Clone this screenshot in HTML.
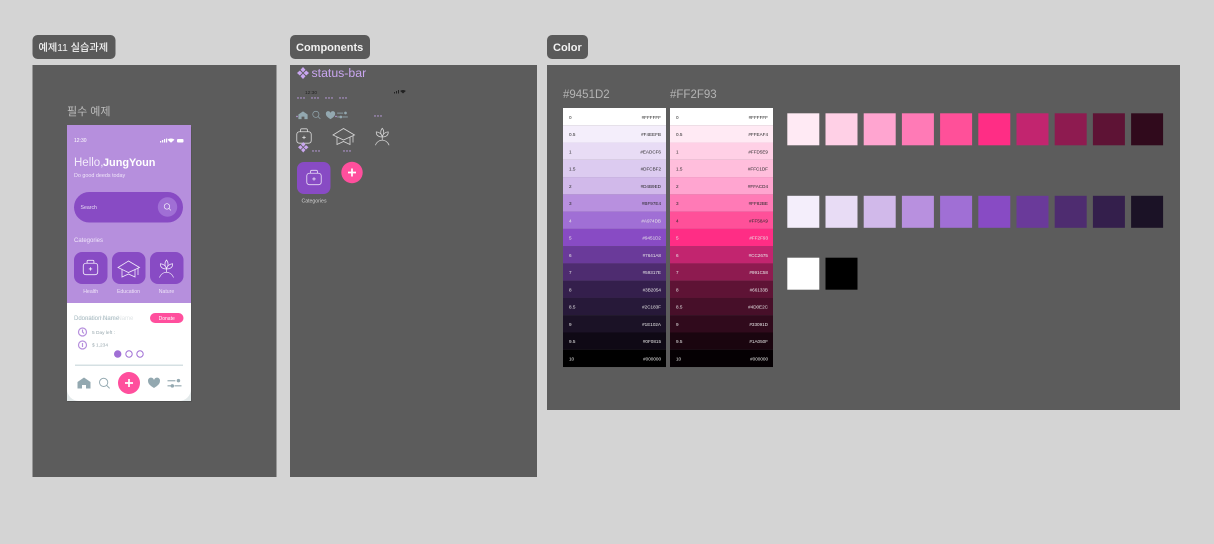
<!DOCTYPE html>
<html lang="ko">
<head>
<meta charset="utf-8">
<title>Design board</title>
<style>
html,body{margin:0;padding:0;background:#d4d4d4;width:1214px;height:544px;overflow:hidden}
svg{display:block;font-family:"Liberation Sans","Noto Sans CJK KR",sans-serif}
.d{fill:#2a2a2a}.l{fill:#e8e8e8}
.t text{font-size:4.6px}
</style>
</head>
<body>
<svg width="1214" height="544" viewBox="0 0 1214 544" xmlns="http://www.w3.org/2000/svg">
<defs>
<symbol id="kit" viewBox="0 0 20 20"><g fill="none" stroke="currentColor" stroke-width="1"><rect x="1.5" y="5" width="17" height="13.5" rx="3"/><path d="M6 5V2.800A1.300 1.300 0 0 1 7.300 1.500h5.400A1.300 1.300 0 0 1 14 2.800V5M8 11.700h4M10 9.700v4"/></g></symbol>
<symbol id="cap" viewBox="0 0 24 18"><g fill="none" stroke="currentColor" stroke-width=".8"><path d="M11.500 1L1 7.500l10.500 5 11-5z"/><path d="M5 9.500v7.500l6.500-3 6.500 3V9.500M21 8v7"/></g></symbol>
<symbol id="plant" viewBox="0 0 18 20"><g fill="none" stroke="currentColor" stroke-width=".8"><path d="M9 1C6.800 3.500 6.800 7 9 10c2.200-3 2.200-6.500 0-9zM2.500 5c-.3 3.300 2 5.500 6.500 5.500C8.700 7.500 6 5.200 2.500 5zM15.500 5c.3 3.300-2 5.500-6.500 5.500.3-3 3-5.300 6.500-5.500zM9 10.500V14M1.500 19.500C3 16 6 14 9 14s6 2 7.500 5.500"/></g></symbol>
<symbol id="home" viewBox="0 0 14 12"><path d="M7 .5L.5 5v6.500h4.500V8h4v3.500h4.500V5z" fill="currentColor"/></symbol>
<symbol id="find" viewBox="0 0 14 14"><g fill="none" stroke="currentColor" stroke-width="1.100"><circle cx="6" cy="6" r="4.800"/><path d="M9.500 9.500L13 13"/></g></symbol>
<symbol id="heart" viewBox="0 0 14 12"><path d="M7 11.500C3 9 .5 7 .5 4A3.200 3.200 0 0 1 7 2.800 3.200 3.200 0 0 1 13.500 4C13.500 7 11 9 7 11.500z" fill="currentColor"/></symbol>
<symbol id="sliders" viewBox="0 0 16 12"><g fill="currentColor"><rect x="0" y="2.500" width="9" height="1.300"/><rect x="0" y="8.300" width="4" height="1.300"/><rect x="8" y="8.300" width="8" height="1.300"/><circle cx="12.500" cy="3" r="2"/><circle cx="5.500" cy="9" r="2"/></g></symbol>
<symbol id="dia" viewBox="0 0 12 12"><g fill="currentColor"><path d="M6 0l2.500 2.800L6 5.400 3.500 2.800zM6 6.600l2.500 2.600L6 12 3.500 9.200zM0 6l2.800-2.500L5.400 6 2.800 8.500zM6.600 6l2.600-2.500L12 6 9.200 8.500z"/></g></symbol>
</defs>

<rect width="1214" height="544" fill="#d4d4d4"/>

<!-- frames -->
<rect x="32.500" y="65" width="244" height="412" fill="#5c5c5c"/>
<rect x="290" y="65" width="247" height="412" fill="#5c5c5c"/>
<rect x="547" y="65" width="633" height="345" fill="#5c5c5c"/>

<!-- frame labels -->
<rect x="32.500" y="35" width="83" height="24" rx="5" fill="#5a5a5a"/>
<text x="38.500" y="51" font-size="10.200" font-weight="500" fill="#f2f2f2">예제11 실습과제</text>
<rect x="290" y="35" width="80" height="24" rx="5" fill="#5a5a5a"/>
<text x="296" y="51" font-size="11" font-weight="700" fill="#f2f2f2">Components</text>
<rect x="547" y="35" width="41" height="24" rx="5" fill="#5a5a5a"/>
<text x="553" y="51" font-size="11" font-weight="700" fill="#f2f2f2">Color</text>

<!-- phone -->
<text x="67" y="115" font-size="11" fill="#bdbdbd">필수 예제</text>
<rect x="67.500" y="127" width="124" height="275" fill="#4e4e4e"/>
<rect x="67" y="125" width="124" height="276" fill="#e3e9ea"/>
<rect x="67" y="125" width="124" height="178" fill="#b68fdd"/>
<path d="M67 303h124v86a12 12 0 0 1-12 12H79a12 12 0 0 1-12-12z" fill="#fff"/>
<text x="74" y="142" font-size="5" fill="#fff">12:30</text>
<g fill="#fff"><rect x="160" y="141" width="1.200" height="1.500"/><rect x="162" y="140" width="1.200" height="2.500"/><rect x="164" y="139" width="1.200" height="3.500"/><rect x="166" y="138.500" width="1.200" height="4"/><path d="M171 138.500c1.700 0 2.800.6 3.400 1.200l-3.400 3-3.400-3c.6-.6 1.700-1.200 3.400-1.200z"/><rect x="177" y="139" width="6.500" height="3.500" rx="1"/></g>
<text x="74" y="166" font-size="11.500" fill="#f3ecfb">Hello,</text>
<text x="103" y="166" font-size="10.900" font-weight="700" fill="#fff">JungYoun</text>
<text x="74" y="177" font-size="5.400" fill="#f0e6fa">Do good deeds today</text>
<rect x="74" y="192" width="109" height="30.500" rx="15.200" fill="#884bc4"/>
<text x="80.500" y="209" font-size="5.200" fill="#e8dcf5">Search</text>
<circle cx="167.500" cy="207" r="9.700" fill="#a06fd5"/>
<use href="#find" x="163.500" y="203" width="8" height="8" color="#fff"/>
<text x="74" y="242" font-size="6" fill="#f0e6fa">Categories</text>
<rect x="74" y="252" width="33.500" height="32" rx="8" fill="#884bc4"/>
<rect x="112" y="252" width="33.500" height="32" rx="8" fill="#884bc4"/>
<rect x="150" y="252" width="33.500" height="32" rx="8" fill="#884bc4"/>
<use href="#kit" x="82" y="259" width="17" height="17" color="#f3ecfb"/>
<use href="#cap" x="117" y="260" width="24" height="18" color="#f3ecfb"/>
<use href="#plant" x="158" y="259" width="17" height="19" color="#f3ecfb"/>
<text x="90.700" y="293" font-size="5.200" text-anchor="middle" fill="#eee4f8">Health</text>
<text x="128.500" y="293" font-size="5.200" text-anchor="middle" fill="#eee4f8">Education</text>
<text x="166.500" y="293" font-size="5.200" text-anchor="middle" fill="#eee4f8">Nature</text>

<text x="74" y="320" font-size="6" fill="#dfe4e6">Donation Name Name</text>
<text x="74" y="320" font-size="6" fill="#a9bcc3">Ddonation Name</text>
<rect x="150" y="313" width="33.500" height="10" rx="5" fill="#ff4f9d"/>
<text x="166.700" y="320" font-size="5" text-anchor="middle" fill="#fff">Donate</text>
<g fill="none" stroke="#b68fdd" stroke-width="1.200"><circle cx="82.500" cy="332" r="4"/><path d="M82.500 329.500V332l1.500 1.500"/><circle cx="82.500" cy="345" r="4"/><path d="M82.500 343v4"/></g>
<text x="92" y="334" font-size="4.800" fill="#98a8ae">5 Day left :</text>
<text x="92" y="346.500" font-size="4.800" fill="#98a8ae">$ 1,234</text>
<circle cx="117.700" cy="354" r="3.700" fill="#a06fd5"/>
<circle cx="129" cy="354" r="3.200" fill="none" stroke="#a06fd5" stroke-width="1"/>
<circle cx="140" cy="354" r="3.200" fill="none" stroke="#a06fd5" stroke-width="1"/>
<rect x="75" y="364.500" width="108" height="1.500" fill="#d5e0e3"/>
<use href="#home" x="77" y="377" width="14" height="12" color="#93a8b0"/>
<use href="#find" x="98.500" y="377" width="12" height="12.500" color="#93a8b0"/>
<circle cx="129" cy="383" r="11" fill="#ff4f9d"/>
<path d="M125 383h8M129 379v8" stroke="#fff" stroke-width="1.700" fill="none"/>
<use href="#heart" x="147.500" y="377.500" width="13" height="11" color="#93a8b0"/>
<use href="#sliders" x="167" y="378" width="15" height="10.500" color="#93a8b0"/>

<!-- components -->
<use href="#dia" x="297" y="67" width="12" height="12" color="#c9a6f0"/>
<text x="311.500" y="77" font-size="12.300" fill="#c9a6f0">status-bar</text>
<text x="305" y="94" font-size="4.800" fill="#222">12:30</text>
<g fill="#222"><rect x="394" y="92" width="1" height="1.500"/><rect x="396" y="91" width="1" height="2.500"/><rect x="398" y="90" width="1" height="3.500"/><path d="M403 90c1.500 0 2.300.5 2.800 1L403 93.500 400.200 91c.5-.5 1.300-1 2.800-1z"/></g>
<g fill="#c9a6f0"><circle cx="298" cy="98" r=".7"/><circle cx="301" cy="98" r=".7"/><circle cx="304" cy="98" r=".7"/><circle cx="312" cy="98" r=".7"/><circle cx="315" cy="98" r=".7"/><circle cx="318" cy="98" r=".7"/><circle cx="326" cy="98" r=".7"/><circle cx="329" cy="98" r=".7"/><circle cx="332" cy="98" r=".7"/><circle cx="340" cy="98" r=".7"/><circle cx="343" cy="98" r=".7"/><circle cx="346" cy="98" r=".7"/>
<circle cx="297" cy="116.500" r=".7"/><circle cx="336" cy="116.500" r=".7"/><circle cx="375" cy="116" r=".7"/><circle cx="378" cy="116" r=".7"/><circle cx="381" cy="116" r=".7"/>
<circle cx="313" cy="151" r=".7"/><circle cx="316" cy="151" r=".7"/><circle cx="319" cy="151" r=".7"/><circle cx="344" cy="151" r=".7"/><circle cx="347" cy="151" r=".7"/><circle cx="350" cy="151" r=".7"/></g>
<use href="#home" x="298" y="111" width="10" height="8.500" color="#93a8b0"/>
<use href="#find" x="312" y="110.500" width="9" height="9" color="#93a8b0"/>
<use href="#heart" x="325.500" y="111" width="10" height="8.500" color="#93a8b0"/>
<use href="#sliders" x="337" y="111" width="11" height="8" color="#93a8b0"/>
<use href="#kit" x="295.500" y="127.500" width="17" height="17" color="#d8d8d8"/>
<use href="#cap" x="332" y="127.500" width="24" height="18" color="#d8d8d8"/>
<use href="#plant" x="374" y="127" width="16.500" height="19" color="#d8d8d8"/>
<use href="#dia" x="298" y="142" width="10.500" height="10.500" color="#c9a6f0"/>
<rect x="297" y="162" width="33.500" height="32" rx="7" fill="#884bc4"/>
<use href="#kit" x="305.500" y="169" width="17" height="17" color="#e8dcf5"/>
<text x="314" y="202.500" font-size="5.200" text-anchor="middle" fill="#cfcfcf">Categories</text>
<circle cx="352" cy="172.500" r="10.700" fill="#ff4f9d"/>
<path d="M348 172.500h8M352 168.500v8" stroke="#fff" stroke-width="1.700" fill="none"/>

<!-- color titles -->
<text x="563" y="98" font-size="11.500" fill="#b4b4b4">#9451D2</text>
<text x="670" y="98" font-size="11.500" fill="#b4b4b4">#FF2F93</text>

<!-- purple table -->
<g>
<rect x="563" y="108" width="103" height="17.300" fill="#ffffff"/>
<rect x="563" y="125.270" width="103" height="17.300" fill="#f4eefb"/>
<rect x="563" y="142.530" width="103" height="17.300" fill="#e8dcf5"/>
<rect x="563" y="159.800" width="103" height="17.300" fill="#dccbf0"/>
<rect x="563" y="177.070" width="103" height="17.300" fill="#d1b9ea"/>
<rect x="563" y="194.330" width="103" height="17.300" fill="#b890df"/>
<rect x="563" y="211.600" width="103" height="17.300" fill="#a06fd5"/>
<rect x="563" y="228.870" width="103" height="17.300" fill="#884bc4"/>
<rect x="563" y="246.130" width="103" height="17.300" fill="#6a3a9a"/>
<rect x="563" y="263.400" width="103" height="17.300" fill="#4e2c70"/>
<rect x="563" y="280.670" width="103" height="17.300" fill="#341f4c"/>
<rect x="563" y="297.930" width="103" height="17.300" fill="#271939"/>
<rect x="563" y="315.200" width="103" height="17.300" fill="#1b1226"/>
<rect x="563" y="332.470" width="103" height="17.300" fill="#0f0915"/>
<rect x="563" y="349.730" width="103" height="17.300" fill="#000000"/>
</g>
<g class="t">
<text class="d" x="569" y="119">0</text><text class="d" x="661" y="119" text-anchor="end">#FFFFFF</text>
<text class="d" x="569" y="136">0.5</text><text class="d" x="661" y="136" text-anchor="end">#F4EEFB</text>
<text class="d" x="569" y="153.500">1</text><text class="d" x="661" y="153.500" text-anchor="end">#EADCF6</text>
<text class="d" x="569" y="170.500">1.5</text><text class="d" x="661" y="170.500" text-anchor="end">#DFCBF2</text>
<text class="d" x="569" y="188">2</text><text class="d" x="661" y="188" text-anchor="end">#D4B9ED</text>
<text class="d" x="569" y="205">3</text><text class="d" x="661" y="205" text-anchor="end">#BF97E4</text>
<text class="l" x="569" y="222.500">4</text><text class="l" x="661" y="222.500" text-anchor="end">#A974DB</text>
<text class="l" x="569" y="239.500">5</text><text class="l" x="661" y="239.500" text-anchor="end">#9451D2</text>
<text class="l" x="569" y="257">6</text><text class="l" x="661" y="257" text-anchor="end">#7641A8</text>
<text class="l" x="569" y="274">7</text><text class="l" x="661" y="274" text-anchor="end">#59317E</text>
<text class="l" x="569" y="291.500">8</text><text class="l" x="661" y="291.500" text-anchor="end">#3B2054</text>
<text class="l" x="569" y="308.500">8.5</text><text class="l" x="661" y="308.500" text-anchor="end">#2C183F</text>
<text class="l" x="569" y="326">9</text><text class="l" x="661" y="326" text-anchor="end">#1E102A</text>
<text class="l" x="569" y="343">9.5</text><text class="l" x="661" y="343" text-anchor="end">#0F0815</text>
<text class="l" x="569" y="360.500">10</text><text class="l" x="661" y="360.500" text-anchor="end">#000000</text>
</g>

<!-- pink table -->
<g>
<rect x="670" y="108" width="103" height="17.300" fill="#ffffff"/>
<rect x="670" y="125.270" width="103" height="17.300" fill="#ffeaf4"/>
<rect x="670" y="142.530" width="103" height="17.300" fill="#ffd0e6"/>
<rect x="670" y="159.800" width="103" height="17.300" fill="#ffbedc"/>
<rect x="670" y="177.070" width="103" height="17.300" fill="#ffa5d0"/>
<rect x="670" y="194.330" width="103" height="17.300" fill="#ff7ab6"/>
<rect x="670" y="211.600" width="103" height="17.300" fill="#ff5099"/>
<rect x="670" y="228.870" width="103" height="17.300" fill="#ff2d85"/>
<rect x="670" y="246.130" width="103" height="17.300" fill="#c2256f"/>
<rect x="670" y="263.400" width="103" height="17.300" fill="#8e1b50"/>
<rect x="670" y="280.670" width="103" height="17.300" fill="#5e1335"/>
<rect x="670" y="297.930" width="103" height="17.300" fill="#470f29"/>
<rect x="670" y="315.200" width="103" height="17.300" fill="#300a1c"/>
<rect x="670" y="332.470" width="103" height="17.300" fill="#1a050f"/>
<rect x="670" y="349.730" width="103" height="17.300" fill="#050003"/>
</g>
<g class="t">
<text class="d" x="676" y="119">0</text><text class="d" x="768" y="119" text-anchor="end">#FFFFFF</text>
<text class="d" x="676" y="136">0.5</text><text class="d" x="768" y="136" text-anchor="end">#FFEAF4</text>
<text class="d" x="676" y="153.500">1</text><text class="d" x="768" y="153.500" text-anchor="end">#FFD5E9</text>
<text class="d" x="676" y="170.500">1.5</text><text class="d" x="768" y="170.500" text-anchor="end">#FFC1DF</text>
<text class="d" x="676" y="188">2</text><text class="d" x="768" y="188" text-anchor="end">#FFACD4</text>
<text class="d" x="676" y="205">3</text><text class="d" x="768" y="205" text-anchor="end">#FF82BE</text>
<text class="d" x="676" y="222.500">4</text><text class="d" x="768" y="222.500" text-anchor="end">#FF58A9</text>
<text class="l" x="676" y="239.500">5</text><text class="l" x="768" y="239.500" text-anchor="end">#FF2F93</text>
<text class="l" x="676" y="257">6</text><text class="l" x="768" y="257" text-anchor="end">#CC2675</text>
<text class="l" x="676" y="274">7</text><text class="l" x="768" y="274" text-anchor="end">#991C58</text>
<text class="l" x="676" y="291.500">8</text><text class="l" x="768" y="291.500" text-anchor="end">#66133B</text>
<text class="l" x="676" y="308.500">8.5</text><text class="l" x="768" y="308.500" text-anchor="end">#4D0E2C</text>
<text class="l" x="676" y="326">9</text><text class="l" x="768" y="326" text-anchor="end">#33091D</text>
<text class="l" x="676" y="343">9.5</text><text class="l" x="768" y="343" text-anchor="end">#1A050F</text>
<text class="l" x="676" y="360.500">10</text><text class="l" x="768" y="360.500" text-anchor="end">#000000</text>
</g>

<!-- swatches -->
<g>
<rect x="787.300" y="113.300" width="32" height="32" fill="#ffeaf4"/>
<rect x="825.500" y="113.300" width="32" height="32" fill="#ffd0e6"/>
<rect x="863.700" y="113.300" width="32" height="32" fill="#ffa5d0"/>
<rect x="901.900" y="113.300" width="32" height="32" fill="#ff7ab6"/>
<rect x="940.100" y="113.300" width="32" height="32" fill="#ff5099"/>
<rect x="978.300" y="113.300" width="32" height="32" fill="#ff2d85"/>
<rect x="1016.500" y="113.300" width="32" height="32" fill="#c2256f"/>
<rect x="1054.700" y="113.300" width="32" height="32" fill="#8e1b50"/>
<rect x="1092.900" y="113.300" width="32" height="32" fill="#5e1335"/>
<rect x="1131.100" y="113.300" width="32" height="32" fill="#300a1c"/>
<rect x="787.300" y="195.800" width="32" height="32" fill="#f4eefb"/>
<rect x="825.500" y="195.800" width="32" height="32" fill="#e8dcf5"/>
<rect x="863.700" y="195.800" width="32" height="32" fill="#d1b9ea"/>
<rect x="901.900" y="195.800" width="32" height="32" fill="#b890df"/>
<rect x="940.100" y="195.800" width="32" height="32" fill="#a06fd5"/>
<rect x="978.300" y="195.800" width="32" height="32" fill="#884bc4"/>
<rect x="1016.500" y="195.800" width="32" height="32" fill="#6a3a9a"/>
<rect x="1054.700" y="195.800" width="32" height="32" fill="#4e2c70"/>
<rect x="1092.900" y="195.800" width="32" height="32" fill="#341f4c"/>
<rect x="1131.100" y="195.800" width="32" height="32" fill="#1b1226"/>
<rect x="787.300" y="257.700" width="32" height="32" fill="#ffffff"/>
<rect x="825.500" y="257.700" width="32" height="32" fill="#000000"/>
</g>
</svg>
</body>
</html>
